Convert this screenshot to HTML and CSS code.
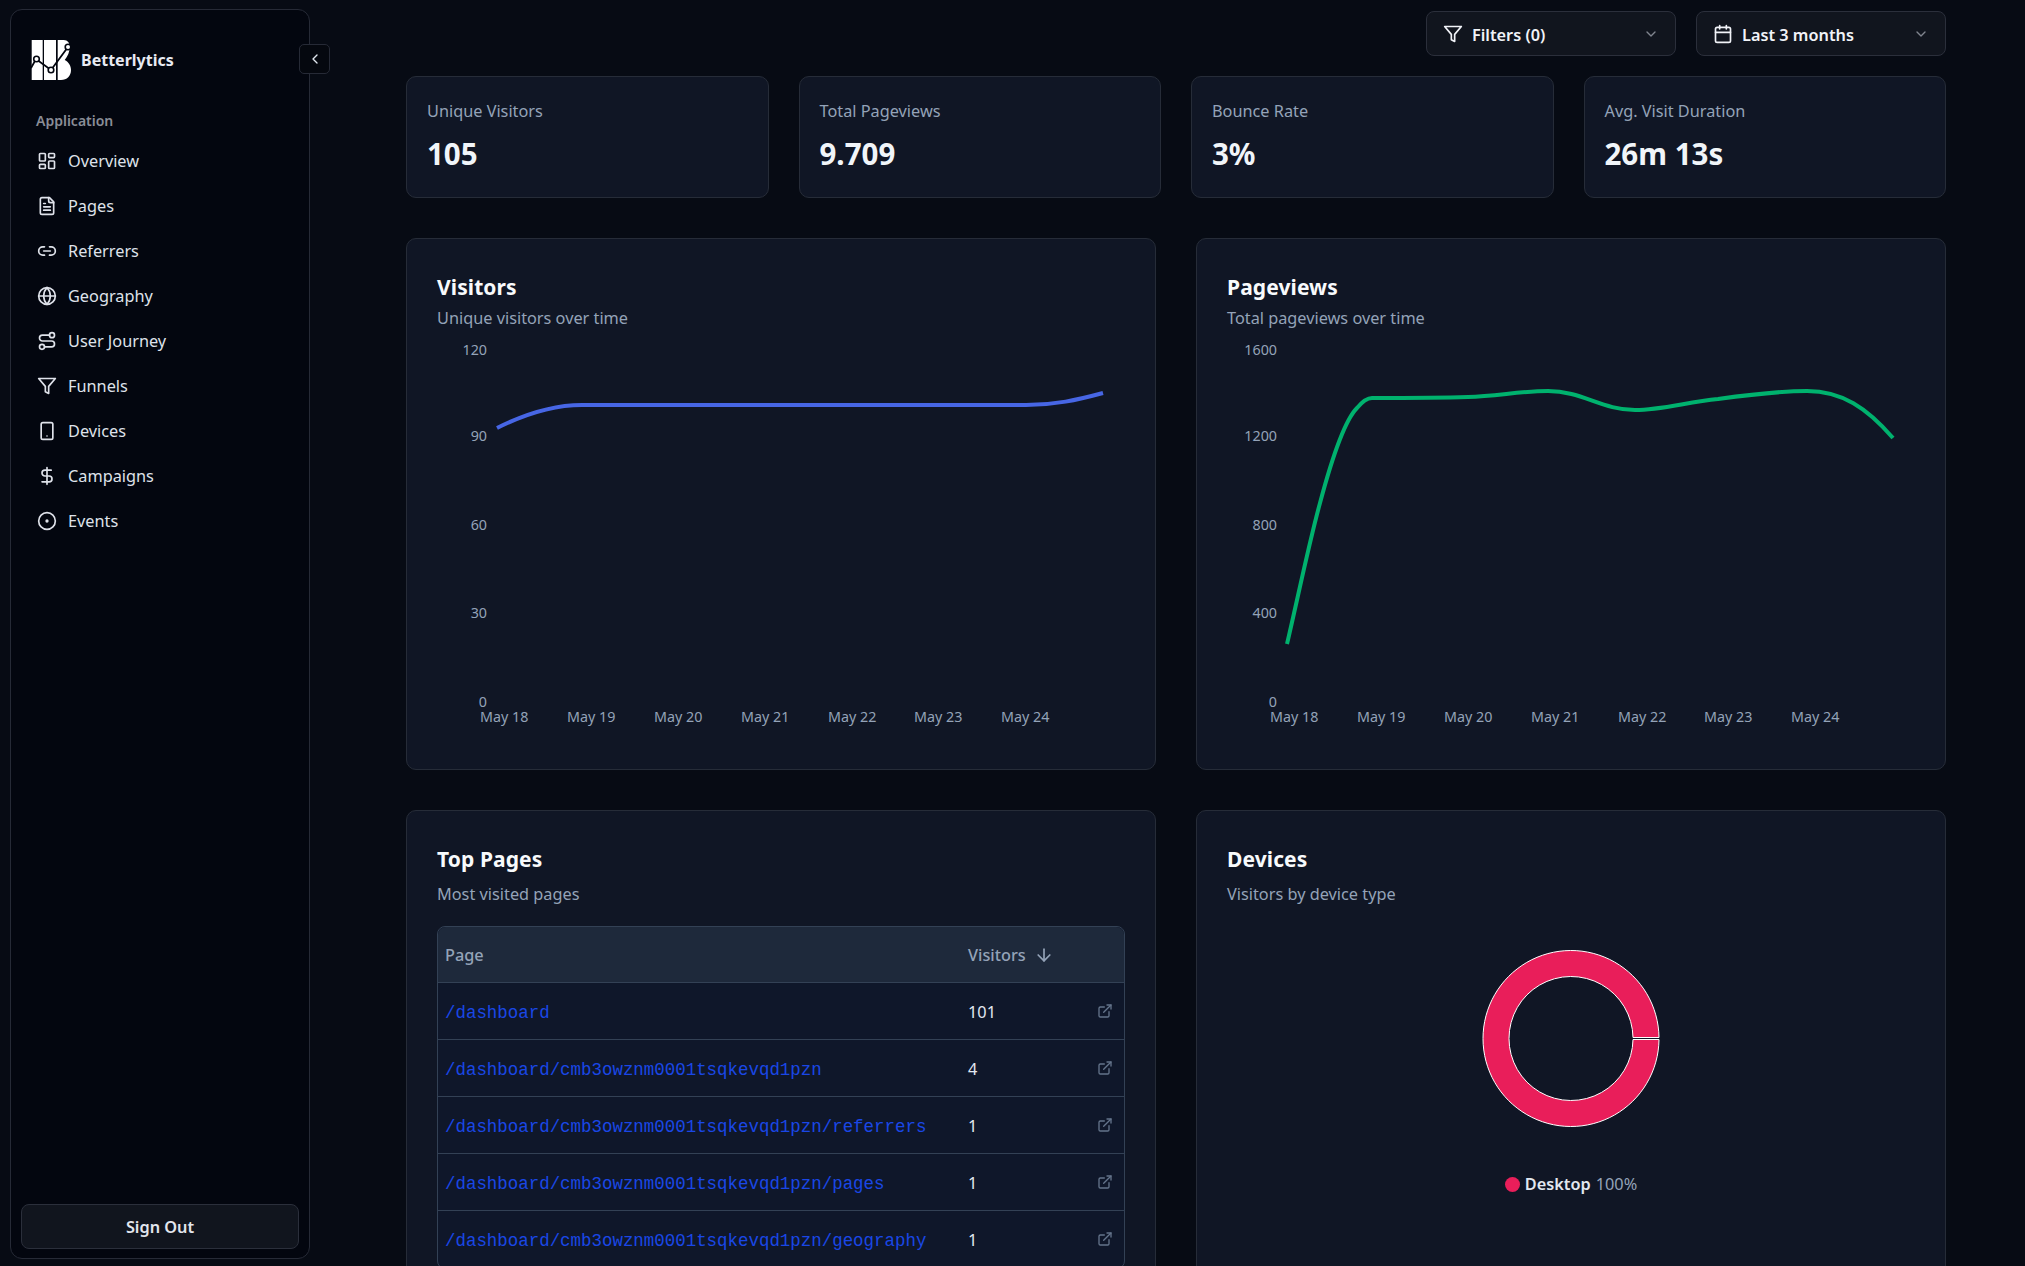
FILE: index.html
```html
<!DOCTYPE html>
<html lang="en">
<head>
    <meta charset="UTF-8">
    <title>Betterlytics</title>
    <link rel="stylesheet" href="styles.css">
</head>
<body>
    <svg class="icon-sprite" aria-hidden="true">
        <symbol id="i-overview" viewBox="0 0 24 24"><rect x="3" y="3" width="7" height="9" rx="1"/><rect x="14" y="3" width="7" height="5" rx="1"/><rect x="14" y="12" width="7" height="9" rx="1"/><rect x="3" y="16" width="7" height="5" rx="1"/></symbol>
        <symbol id="i-pages" viewBox="0 0 24 24"><path d="M15 2H6a2 2 0 0 0-2 2v16a2 2 0 0 0 2 2h12a2 2 0 0 0 2-2V7Z"/><path d="M14 2v4a2 2 0 0 0 2 2h4"/><path d="M10 9H8"/><path d="M16 13H8"/><path d="M16 17H8"/></symbol>
        <symbol id="i-link" viewBox="0 0 24 24"><path d="M9 17H7A5 5 0 0 1 7 7h2"/><path d="M15 7h2a5 5 0 1 1 0 10h-2"/><path d="M8 12h8"/></symbol>
        <symbol id="i-globe" viewBox="0 0 24 24"><circle cx="12" cy="12" r="10"/><path d="M12 2a14.5 14.5 0 0 0 0 20 14.5 14.5 0 0 0 0-20"/><path d="M2 12h20"/></symbol>
        <symbol id="i-route" viewBox="0 0 24 24"><circle cx="6" cy="19" r="3"/><path d="M9 19h8.5a3.5 3.5 0 0 0 0-7h-11a3.5 3.5 0 0 1 0-7H15"/><circle cx="18" cy="5" r="3"/></symbol>
        <symbol id="i-funnel" viewBox="0 0 24 24"><path d="M22 3H2l8 9.46V19l4 2v-8.54L22 3z"/></symbol>
        <symbol id="i-device" viewBox="0 0 24 24"><rect x="5" y="2" width="14" height="20" rx="2"/><path d="M12 18h.01"/></symbol>
        <symbol id="i-dollar" viewBox="0 0 24 24"><path d="M12 2v20"/><path d="M17 5H9.5a3.5 3.5 0 0 0 0 7h5a3.5 3.5 0 0 1 0 7H6"/></symbol>
        <symbol id="i-dot" viewBox="0 0 24 24"><circle cx="12" cy="12" r="10"/><circle cx="12" cy="12" r="1"/></symbol>
        <symbol id="i-calendar" viewBox="0 0 24 24"><rect x="3" y="4" width="18" height="18" rx="2"/><path d="M16 2v4"/><path d="M8 2v4"/><path d="M3 10h18"/></symbol>
        <symbol id="i-down" viewBox="0 0 24 24"><path d="m6 9 6 6 6-6"/></symbol>
        <symbol id="i-left" viewBox="0 0 24 24"><path d="m15 18-6-6 6-6"/></symbol>
        <symbol id="i-arrow" viewBox="0 0 24 24"><path d="M12 5v14"/><path d="m19 12-7 7-7-7"/></symbol>
        <symbol id="i-external" viewBox="0 0 24 24"><path d="M15 3h6v6"/><path d="M10 14 21 3"/><path d="M18 13v6a2 2 0 0 1-2 2H5a2 2 0 0 1-2-2V8a2 2 0 0 1 2-2h6"/></symbol>
    </svg>

    <div class="app">
        <aside class="sidebar">
            <button class="collapse-button"><svg class="icon icon-small"><use href="#i-left"/></svg></button>
            <div class="brand">
                <svg class="logo" viewBox="0 0 40 40">
                    <path class="logo-fill" d="M0.7 0h11v40h-11z"/>
                    <path class="logo-fill" d="M13 0h12v40h-12z"/>
                    <path class="logo-fill" d="M26.7 0h6c4 0 6 3 6 7 0 5-2 9-5 13 4 2 6.300 6 6.300 10 0 6-4 10-10 10h-3.300z"/>
                    <path class="logo-line" d="M0 28 5 19 20 30 37 7"/>
                    <circle class="logo-node" cx="5.500" cy="19" r="2.800"/>
                    <circle class="logo-node" cx="20" cy="30" r="2.800"/>
                    <circle class="logo-node" cx="37" cy="7" r="2.800"/>
                </svg>
                <span class="brand-name">Betterlytics</span>
            </div>
            <div class="nav-title">Application</div>
            <nav class="nav">
                <a class="nav-item"><svg class="icon"><use href="#i-overview"/></svg>Overview</a>
                <a class="nav-item"><svg class="icon"><use href="#i-pages"/></svg>Pages</a>
                <a class="nav-item"><svg class="icon"><use href="#i-link"/></svg>Referrers</a>
                <a class="nav-item"><svg class="icon"><use href="#i-globe"/></svg>Geography</a>
                <a class="nav-item"><svg class="icon"><use href="#i-route"/></svg>User Journey</a>
                <a class="nav-item"><svg class="icon"><use href="#i-funnel"/></svg>Funnels</a>
                <a class="nav-item"><svg class="icon"><use href="#i-device"/></svg>Devices</a>
                <a class="nav-item"><svg class="icon"><use href="#i-dollar"/></svg>Campaigns</a>
                <a class="nav-item"><svg class="icon"><use href="#i-dot"/></svg>Events</a>
            </nav>
            <button class="sign-out">Sign Out</button>
        </aside>

        <main class="main">
            <div class="toolbar">
                <button class="select"><svg class="icon"><use href="#i-funnel"/></svg><span class="select-label">Filters (0)</span><svg class="icon icon-small select-arrow"><use href="#i-down"/></svg></button>
                <button class="select"><svg class="icon"><use href="#i-calendar"/></svg><span class="select-label">Last 3 months</span><svg class="icon icon-small select-arrow"><use href="#i-down"/></svg></button>
            </div>

            <section class="stats">
                <div class="stat"><div class="stat-label">Unique Visitors</div><div class="stat-value">105</div></div>
                <div class="stat"><div class="stat-label">Total Pageviews</div><div class="stat-value">9.709</div></div>
                <div class="stat"><div class="stat-label">Bounce Rate</div><div class="stat-value">3%</div></div>
                <div class="stat"><div class="stat-label">Avg. Visit Duration</div><div class="stat-value">26m 13s</div></div>
            </section>

            <section class="panels">
                <div class="panel panel-chart">
                    <h2>Visitors</h2>
                    <p class="panel-sub">Unique visitors over time</p>
                    <svg class="chart" viewBox="0 0 687 407">
                        <g class="axis-y">
                            <text x="50" y="17">120</text><text x="50" y="103">90</text><text x="50" y="192">60</text><text x="50" y="280">30</text><text x="50" y="369">0</text>
                        </g>
                        <g class="axis-x">
                            <text x="43" y="384">May 18</text><text x="130" y="384">May 19</text><text x="217" y="384">May 20</text><text x="304" y="384">May 21</text><text x="391" y="384">May 22</text><text x="477" y="384">May 23</text><text x="564" y="384">May 24</text>
                        </g>
                        <path class="line line-blue" d="M60 90C88 76 115 67 145 67H589C618 67 640 62 666 55"/>
                    </svg>
                </div>
                <div class="panel panel-chart">
                    <h2>Pageviews</h2>
                    <p class="panel-sub">Total pageviews over time</p>
                    <svg class="chart" viewBox="0 0 687 407">
                        <g class="axis-y">
                            <text x="50" y="17">1600</text><text x="50" y="103">1200</text><text x="50" y="192">800</text><text x="50" y="280">400</text><text x="50" y="369">0</text>
                        </g>
                        <g class="axis-x">
                            <text x="43" y="384">May 18</text><text x="130" y="384">May 19</text><text x="217" y="384">May 20</text><text x="304" y="384">May 21</text><text x="391" y="384">May 22</text><text x="477" y="384">May 23</text><text x="564" y="384">May 24</text>
                        </g>
                        <path class="line line-green" d="M60 306C71 259 82 205 93 165C101 135 115 85 130 70C135 64 140 60 145 60C175 60 210 60 241 59C270 58 295 53 321 53C355 53 375 72 408 72C435 72 460 64 491 61C520 57 550 53 580 53C615 53 640 70 666 100"/>
                    </svg>
                </div>
                <div class="panel">
                    <h2>Top Pages</h2>
                    <p class="panel-sub panel-sub-wide">Most visited pages</p>
                    <table class="table">
                        <thead>
                            <tr><th class="col-page">Page</th><th class="col-count">Visitors <svg class="icon sort-arrow"><use href="#i-arrow"/></svg></th><th class="col-link"></th></tr>
                        </thead>
                        <tbody>
                            <tr><td><a class="page-link">/dashboard</a></td><td>101</td><td><svg class="icon icon-ext"><use href="#i-external"/></svg></td></tr>
                            <tr><td><a class="page-link">/dashboard/cmb3owznm0001tsqkevqd1pzn</a></td><td>4</td><td><svg class="icon icon-ext"><use href="#i-external"/></svg></td></tr>
                            <tr><td><a class="page-link">/dashboard/cmb3owznm0001tsqkevqd1pzn/referrers</a></td><td>1</td><td><svg class="icon icon-ext"><use href="#i-external"/></svg></td></tr>
                            <tr><td><a class="page-link">/dashboard/cmb3owznm0001tsqkevqd1pzn/pages</a></td><td>1</td><td><svg class="icon icon-ext"><use href="#i-external"/></svg></td></tr>
                            <tr><td><a class="page-link">/dashboard/cmb3owznm0001tsqkevqd1pzn/geography</a></td><td>1</td><td><svg class="icon icon-ext"><use href="#i-external"/></svg></td></tr>
                        </tbody>
                    </table>
                </div>
                <div class="panel">
                    <h2>Devices</h2>
                    <p class="panel-sub panel-sub-wide">Visitors by device type</p>
                    <div class="donut-wrap">
                        <svg class="donut" viewBox="0 0 200 200">
                            <path d="M188 101.500A88 88 0 1 1 188 99.500L162 99.500A62 62 0 1 0 162 101.500Z"/>
                        </svg>
                        <div class="legend"><span class="legend-dot"></span><span class="legend-name">Desktop</span><span class="legend-value">100%</span></div>
                    </div>
                </div>
            </section>
        </main>
    </div>
</body>
</html>
```

FILE: styles.css
```css
html, body { margin: 0; padding: 0; height: 100%; overflow: hidden; }
body { background: #070b14; color: #e2e8f0; font-family: "Noto Sans", "Open Sans", sans-serif; font-size: 16.3px; }
button { font-family: inherit; cursor: pointer; }
h2, p { margin: 0; }

.icon-sprite { display: none; }
.icon { width: 20px; height: 20px; flex: none; fill: none; stroke: currentColor; stroke-width: 2; stroke-linecap: round; stroke-linejoin: round; }
.icon-small { width: 16px; height: 16px; }

.app { display: flex; height: 1266px; }

/* sidebar */
.sidebar { position: relative; box-sizing: border-box; width: 300px; margin: 9px 0 7px 10px; padding: 30px 10px 9px; background: #03060f; border: 1px solid #262a36; border-radius: 12px; display: flex; flex-direction: column; flex: none; }
.collapse-button { position: absolute; top: 34px; right: -21px; width: 31px; height: 30px; padding: 0; display: flex; align-items: center; justify-content: center; background: #05080f; border: 1px solid #262a36; border-radius: 5px; color: #e2e8f0; }
.brand { display: flex; align-items: center; gap: 10px; padding-left: 10px; height: 40px; }
.logo { width: 40px; height: 40px; flex: none; }
.logo-fill { fill: #fff; }
.logo-line { fill: none; stroke: #03060f; stroke-width: 1.8; }
.logo-node { fill: #fff; stroke: #03060f; stroke-width: 1.6; }
.brand-name { font-weight: 700; font-size: 16px; color: #e8eaf2; }
.nav-title { margin: 30px 0 0 15px; font-size: 14px; font-weight: 600; color: #8a8d97; line-height: 22px; }
.nav { display: flex; flex-direction: column; margin-top: 6px; }
.nav-item { display: flex; align-items: center; gap: 11px; height: 45px; padding-left: 16px; color: #dfe2ea; }
.sign-out { margin-top: auto; height: 45px; background: #11151e; border: 1px solid #2b2f3b; border-radius: 8px; color: #e2e5ed; font-size: 16.3px; font-weight: 600; }

/* main area */
.main { flex: 1; min-width: 0; padding: 11px 79px 0 96px; }
.toolbar { display: flex; justify-content: flex-end; gap: 20px; }
.select { box-sizing: border-box; width: 250px; height: 45px; display: flex; align-items: center; gap: 9px; padding: 0 16px; background: #11151e; border: 1px solid #2b2f3b; border-radius: 8px; color: #f1f3f8; font-size: 16.3px; font-weight: 600; }
.select-label { flex: 1; text-align: left; padding-top: 2px; }
.select-arrow { color: #80858f; }

.stats { display: grid; grid-template-columns: repeat(4, 1fr); gap: 30px; margin-top: 20px; }
.stat { box-sizing: border-box; height: 122px; padding: 22px 20px; background: #101625; border: 1px solid #262c38; border-radius: 10px; }
.stat-label { color: #94a3b8; line-height: 24px; }
.stat-value { margin-top: 13px; font-size: 29.5px; font-weight: 700; line-height: 36px; color: #f1f5f9; }

.panels { display: grid; grid-template-columns: repeat(2, 1fr); gap: 40px; margin-top: 40px; }
.panel { box-sizing: border-box; padding: 34px 30px 0; background: #101625; border: 1px solid #262c38; border-radius: 10px; min-height: 532px; }
.panel h2 { font-size: 21px; font-weight: 700; line-height: 28px; color: #f8fafc; letter-spacing: 0.1px; }
.panel-sub { margin-top: 5px; color: #94a3b8; line-height: 24px; }
.panel-sub-wide { margin-top: 9px; }

.chart { display: block; width: 687px; height: 407px; margin-top: 8px; }
.chart text { font-size: 14.3px; fill: #94a3b8; }
.axis-y text { text-anchor: end; }
.line { fill: none; stroke-width: 4; }
.line-blue { stroke: #4766e5; }
.line-green { stroke: #00b26e; }

/* top pages table */
.table { width: 100%; margin-top: 20px; table-layout: fixed; border-collapse: separate; border-spacing: 0; border: 1px solid #334155; border-radius: 8px; background: #0f172a; }
.table th { height: 55px; padding: 0 0 0 7px; text-align: left; font-weight: 500; color: #94a3b8; background: #1e293b; border-bottom: 1px solid #334155; }
.table th:first-child { border-top-left-radius: 8px; }
.table th:last-child { border-top-right-radius: 8px; }
.table td { height: 54px; padding: 2px 0 0 7px; color: #e2e8f0; border-bottom: 1px solid #334155; }
.col-page { width: 516px; }
.col-count { width: 108px; }
.sort-arrow { margin-left: 4px; vertical-align: -4px; color: #94a3b8; }
.page-link { font-family: "Liberation Mono", monospace; font-size: 17.45px; color: #1a47e6; white-space: nowrap; }
.icon-ext { width: 16px; height: 16px; margin: -2px 0 0 14px; color: #64748b; display: block; }

/* devices */
.donut-wrap { display: flex; flex-direction: column; align-items: center; margin-top: 32px; }
.donut { width: 200px; height: 200px; }
.donut path { fill: #e91e5a; stroke: #fff; stroke-width: 1; }
.legend { display: flex; align-items: center; margin-top: 35px; }
.legend-dot { width: 15px; height: 15px; border-radius: 50%; background: #e91e5a; margin-right: 5px; }
.legend-name { font-weight: 600; color: #e2e8f0; margin-right: 5px; }
.legend-value { color: #94a3b8; }
```
